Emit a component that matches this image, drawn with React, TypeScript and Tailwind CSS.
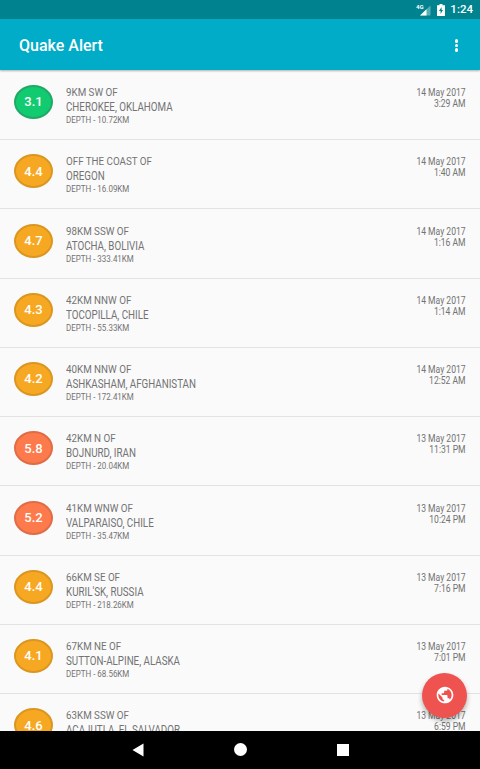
interface Quake {
  mag: string;
  offset: string;
  place: string;
  depth: string;
  date: string;
  time: string;
}

const quakes: Quake[] = [
  { mag: "3.1", offset: "9KM SW OF", place: "CHEROKEE, OKLAHOMA", depth: "10.72KM", date: "14 May 2017", time: "3:29 AM" },
  { mag: "4.4", offset: "OFF THE COAST OF", place: "OREGON", depth: "16.09KM", date: "14 May 2017", time: "1:40 AM" },
  { mag: "4.7", offset: "98KM SSW OF", place: "ATOCHA, BOLIVIA", depth: "333.41KM", date: "14 May 2017", time: "1:16 AM" },
  { mag: "4.3", offset: "42KM NNW OF", place: "TOCOPILLA, CHILE", depth: "55.33KM", date: "14 May 2017", time: "1:14 AM" },
  { mag: "4.2", offset: "40KM NNW OF", place: "ASHKASHAM, AFGHANISTAN", depth: "172.41KM", date: "14 May 2017", time: "12:52 AM" },
  { mag: "5.8", offset: "42KM N OF", place: "BOJNURD, IRAN", depth: "20.04KM", date: "13 May 2017", time: "11:31 PM" },
  { mag: "5.2", offset: "41KM WNW OF", place: "VALPARAISO, CHILE", depth: "35.47KM", date: "13 May 2017", time: "10:24 PM" },
  { mag: "4.4", offset: "66KM SE OF", place: "KURIL'SK, RUSSIA", depth: "218.26KM", date: "13 May 2017", time: "7:16 PM" },
  { mag: "4.1", offset: "67KM NE OF", place: "SUTTON-ALPINE, ALASKA", depth: "68.56KM", date: "13 May 2017", time: "7:01 PM" },
  { mag: "4.6", offset: "63KM SSW OF", place: "ACAJUTLA, EL SALVADOR", depth: "", date: "13 May 2017", time: "6:59 PM" },
];

const getBadgeColor = (mag: string) => {
  const value = parseFloat(mag);
  if (value < 4) return "bg-[#12cb71] border-[#1fa965]";
  if (value < 5) return "bg-[#f7a823] border-[#db961f]";
  return "bg-[#fc7a4b] border-[#e06c46]";
};

const StatusBar = () => (
  <div className="flex h-[19px] shrink-0 items-center justify-end bg-[#00838f] pr-[7px] text-white">
    <svg className="mr-[6px] h-[14px] w-[15px]" viewBox="0 0 15 14">
      <path d="M14.5 2.5V12.5H4z" fill="#fff" opacity=".35" />
      <path d="M10.5 6.3V12.5H4z" fill="#fff" />
      <text x="0" y="5.8" fontSize="6" fontWeight="700" fill="#fff" fontFamily="Roboto">4G</text>
    </svg>
    <svg className="mr-[5px] h-[12px] w-[8px]" viewBox="0 0 8 12">
      <path d="M2.5 0h3v1.2H8V12H0V1.2h2.5z" fill="#fff" />
      <path d="M4.6 3L2 7h1.6v3L6 6H4.6z" fill="#00838f" />
    </svg>
    <span className="pt-[1px] text-[11.5px] leading-none font-medium">1:24</span>
  </div>
);

const QuakeRow = ({ quake }: { quake: Quake }) => (
  <li className="flex h-[69.25px] shrink-0 border-b border-[#e3e3e3] pr-[14.5px] pl-[14px]">
    <div
      className={`mt-[14.25px] flex h-[34px] w-[39px] shrink-0 items-center justify-center rounded-[50%] border-[2.5px] text-[13px] font-medium text-white ${getBadgeColor(quake.mag)}`}
    >
      {quake.mag}
    </div>
    <div className="ml-[12.5px] flex-1 pt-[15.25px] whitespace-nowrap text-[#737373]">
      <p className="origin-left scale-x-[0.95] text-[10.3px] leading-[13px]">{quake.offset}</p>
      <p className="origin-left scale-x-[0.815] text-[12px] leading-[16px]">{quake.place}</p>
      <p className="origin-left scale-x-[0.96] text-[8.3px] leading-[10.5px]">
        {quake.depth && `DEPTH - ${quake.depth}`}
      </p>
    </div>
    <div className="origin-right scale-x-[0.84] pt-[16.25px] text-right text-[10.2px] leading-[11px] whitespace-nowrap text-[#737373]">
      <p>{quake.date}</p>
      <p>{quake.time}</p>
    </div>
  </li>
);

const App = () => {
  return (
    <div className="relative flex h-[769px] w-[480px] flex-col overflow-hidden bg-[#fafafa] font-[Roboto,sans-serif]">
      <StatusBar />
      <header className="z-10 flex h-[51px] shrink-0 items-center justify-between bg-[#00acc7] pt-[2px] pr-[22px] pl-[19px] text-white shadow-[0_1px_2px_rgba(0,0,0,0.3)]">
        <h1 className="text-[16px] font-medium">Quake Alert</h1>
        <div className="flex flex-col gap-[1px]">
          <span className="size-[3.5px] rounded-full bg-white" />
          <span className="size-[3.5px] rounded-full bg-white" />
          <span className="size-[3.5px] rounded-full bg-white" />
        </div>
      </header>
      <ul className="flex min-h-0 flex-1 flex-col overflow-hidden pt-[0.75px]">
        {quakes.map((quake, i) => (
          <QuakeRow key={i} quake={quake} />
        ))}
      </ul>
      <button className="absolute right-[13px] bottom-[51.5px] flex size-[45px] items-center justify-center rounded-full bg-[#ef5350] shadow-[0_3px_5px_rgba(0,0,0,0.3)]">
        <svg className="size-[20px]" viewBox="0 0 24 24" fill="#fff">
          <path d="M12 2C6.48 2 2 6.48 2 12s4.48 10 10 10 10-4.48 10-10S17.52 2 12 2zm-1 17.93c-3.95-.49-7-3.85-7-7.93 0-.62.08-1.21.21-1.79L9 15v1c0 1.1.9 2 2 2v1.93zm6.9-2.54c-.26-.81-1-1.39-1.9-1.39h-1v-3c0-.55-.45-1-1-1H8v-2h2c.55 0 1-.45 1-1V7h2c1.1 0 2-.9 2-2v-.41c2.93 1.19 5 4.06 5 7.41 0 2.08-.8 3.97-2.1 5.39z" />
        </svg>
      </button>
      <nav className="z-10 flex h-[38.5px] shrink-0 items-center justify-center gap-[90px] bg-black">
        <svg className="h-[14px] w-[12px]" viewBox="0 0 12 14" fill="#fff">
          <path d="M11.5.5v13L.5 7z" />
        </svg>
        <span className="size-[13px] rounded-full bg-white" />
        <span className="size-[12px] bg-white" />
      </nav>
    </div>
  );
};

export default App;
